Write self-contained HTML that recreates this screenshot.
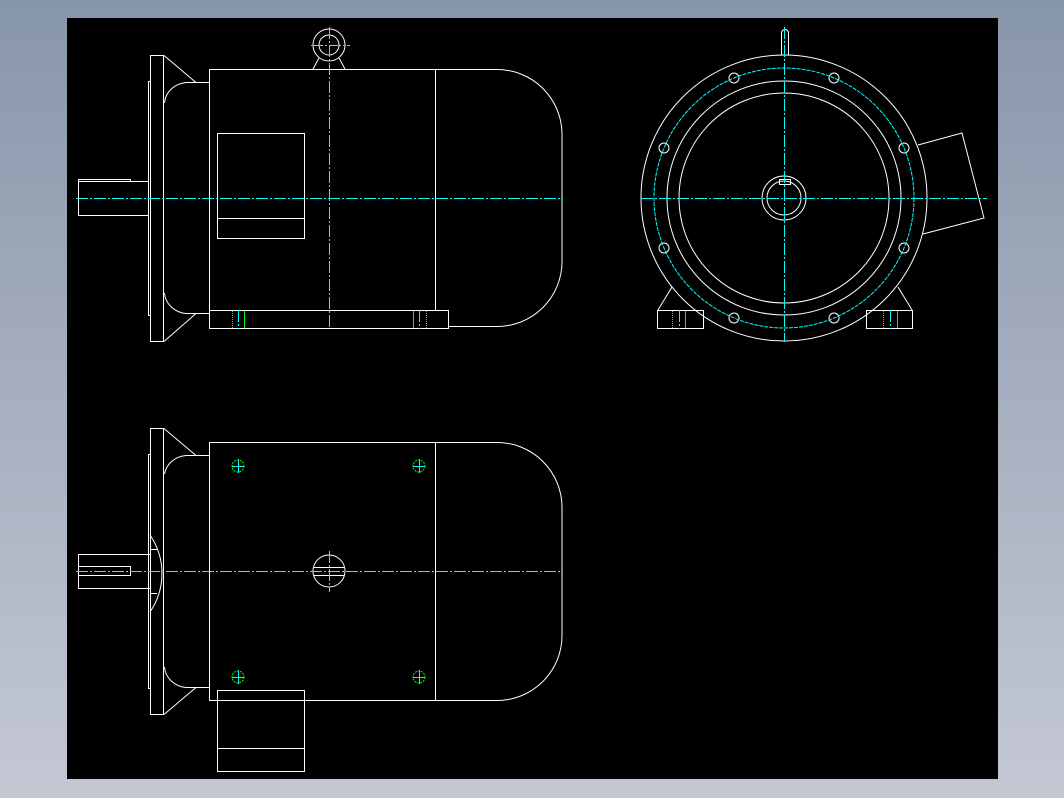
<!DOCTYPE html>
<html><head><meta charset="utf-8"><style>
html,body{margin:0;padding:0;width:1064px;height:798px;overflow:hidden;background:linear-gradient(#8896aa,#c4c8d4);}
svg{position:absolute;left:0;top:0}
</style></head><body>
<svg width="1064" height="798" viewBox="0 0 1064 798" xmlns="http://www.w3.org/2000/svg">
<rect x="67" y="18" width="931" height="761" fill="#000"/>
<g fill="none" stroke="#fff" stroke-width="1">
<!-- TOP-LEFT VIEW -->
<rect x="150.5" y="55.5" width="13" height="286"/>
<rect x="148.5" y="81.5" width="2" height="234"/>
<rect x="78.5" y="181.5" width="70" height="34"/>
<polyline points="78.5,181.5 78.5,179.5 130.5,179.5 130.5,181.5"/>
<polyline points="164,55.5 196,82.5 209,82.5"/>
<polyline points="164,341.5 196,313.5 209,313.5"/>
<path d="M164.5,103 A24 22 0 0 1 186,82.5 L196,82.5"/>
<path d="M164.5,293 A24 22 0 0 0 186,313.5 L196,313.5"/>
<rect x="209.5" y="69.5" width="226" height="241"/>
<path d="M435.5,69.5 L497,69.5 A65 65 0 0 1 562,134 L562,262 A65 65 0 0 1 497,326.5 L448,326.5"/>
<rect x="209.5" y="310.5" width="239" height="18"/>
<rect x="217.5" y="133.5" width="87" height="105"/>
<line x1="217.5" y1="218.5" x2="304.5" y2="218.5"/>
<circle cx="329" cy="45" r="16"/>
<circle cx="329" cy="45" r="10"/>
<line x1="313" y1="69" x2="319" y2="58"/>
<line x1="345" y1="69" x2="339" y2="58"/>
<!-- FRONT VIEW -->
<circle cx="784" cy="198" r="143"/>
<circle cx="784" cy="198" r="117"/>
<circle cx="784" cy="198" r="105"/>
<circle cx="784" cy="198" r="22"/>
<circle cx="784" cy="198" r="17"/>
<rect x="779.5" y="179.5" width="11" height="5"/>
<path d="M781.5,55 L781.5,33 A3.5 3.5 0 0 1 788.5,33 L788.5,55"/>
<polyline points="918,145 962,133 984,218 923,234"/>
<rect x="657.5" y="310.5" width="46" height="18"/>
<rect x="866.5" y="310.5" width="46" height="18"/>
<line x1="658" y1="310" x2="672" y2="287"/>
<line x1="912" y1="310" x2="898" y2="287"/>
<g>
<circle cx="734" cy="78" r="5"/><circle cx="834" cy="78" r="5"/>
<circle cx="664" cy="148" r="5"/><circle cx="904" cy="148" r="5"/>
<circle cx="664" cy="248" r="5"/><circle cx="904" cy="248" r="5"/>
<circle cx="734" cy="318" r="5"/><circle cx="834" cy="318" r="5"/>
</g>
<!-- BOTTOM VIEW -->
<rect x="150.5" y="428.5" width="13" height="286"/>
<rect x="148.5" y="454.5" width="2" height="234"/>
<rect x="78.5" y="554.5" width="72" height="34"/>
<rect x="78.5" y="566.5" width="52" height="9"/>
<path d="M150,535 A68 68 0 0 1 150,612"/>
<line x1="150" y1="549.5" x2="157" y2="549.5"/>
<line x1="150" y1="593.5" x2="157" y2="593.5"/>
<polyline points="164,428.5 196,455.5 209,455.5"/>
<polyline points="164,714.5 196,687.5 209,687.5"/>
<path d="M164.5,474 A24 22 0 0 1 186,455.5 L196,455.5"/>
<path d="M164.5,667 A24 22 0 0 0 186,687.5 L196,687.5"/>
<rect x="209.5" y="442.5" width="226" height="258"/>
<path d="M435.5,442.5 L497,442.5 A65 65 0 0 1 562,507 L562,635 A65 65 0 0 1 497,700.5 L435.5,700.5"/>
<rect x="217.5" y="690.5" width="87" height="81"/>
<line x1="217.5" y1="748.5" x2="304.5" y2="748.5"/>
<circle cx="329" cy="571" r="16"/>
<line x1="314" y1="567.5" x2="344" y2="567.5"/>
<line x1="314" y1="575.5" x2="344" y2="575.5"/>
</g>
<!-- centerlines -->
<g stroke="#0ff" stroke-width="1" stroke-dasharray="12,2,2,2" fill="none">
<line x1="76" y1="198.5" x2="563" y2="198.5"/>
<line x1="329.5" y1="27" x2="329.5" y2="329"/>
<line x1="311" y1="45.5" x2="350" y2="45.5"/>
<line x1="641" y1="198.5" x2="987" y2="198.5"/>
<line x1="784.5" y1="27" x2="784.5" y2="342"/>
<circle cx="784" cy="198" r="130" stroke-dasharray="4,1"/>
<line x1="76" y1="571.5" x2="563" y2="571.5"/>
<line x1="329.5" y1="551" x2="329.5" y2="592"/>
<line x1="238.5" y1="310" x2="238.5" y2="329"/>
<line x1="419.5" y1="310" x2="419.5" y2="329"/>
<line x1="679.5" y1="310" x2="679.5" y2="329"/>
<line x1="890.5" y1="310" x2="890.5" y2="329"/>
</g>
<g stroke="#0ff" stroke-width="1">
<line x1="232" y1="466.5" x2="244" y2="466.5"/><line x1="238.5" y1="459" x2="238.5" y2="473"/>
<line x1="413" y1="466.5" x2="425" y2="466.5"/><line x1="419.5" y1="459" x2="419.5" y2="473"/>
<line x1="232" y1="677.5" x2="244" y2="677.5"/><line x1="238.5" y1="670" x2="238.5" y2="684"/>
<line x1="413" y1="677.5" x2="425" y2="677.5"/><line x1="419.5" y1="670" x2="419.5" y2="684"/>
</g>
<g stroke="#0f0" stroke-width="1" fill="none">
<circle cx="238" cy="466" r="6" stroke-dasharray="2,1"/>
<circle cx="419" cy="466" r="6" stroke-dasharray="2,1"/>
<circle cx="238" cy="677" r="6" stroke-dasharray="2,1"/>
<circle cx="419" cy="677" r="6" stroke-dasharray="2,1"/>
<line x1="232.5" y1="311" x2="232.5" y2="328" stroke-dasharray="1,1"/>
<line x1="244.5" y1="311" x2="244.5" y2="328"/>
<line x1="413.5" y1="311" x2="413.5" y2="328"/>
<line x1="426.5" y1="311" x2="426.5" y2="328" stroke-dasharray="1,1"/>
<line x1="672.5" y1="311" x2="672.5" y2="328" stroke-dasharray="1,1"/>
<line x1="685.5" y1="311" x2="685.5" y2="328"/>
<line x1="883.5" y1="311" x2="883.5" y2="328" stroke-dasharray="1,1"/>
<line x1="897.5" y1="311" x2="897.5" y2="328"/>
</g>
</svg>
</body></html>
